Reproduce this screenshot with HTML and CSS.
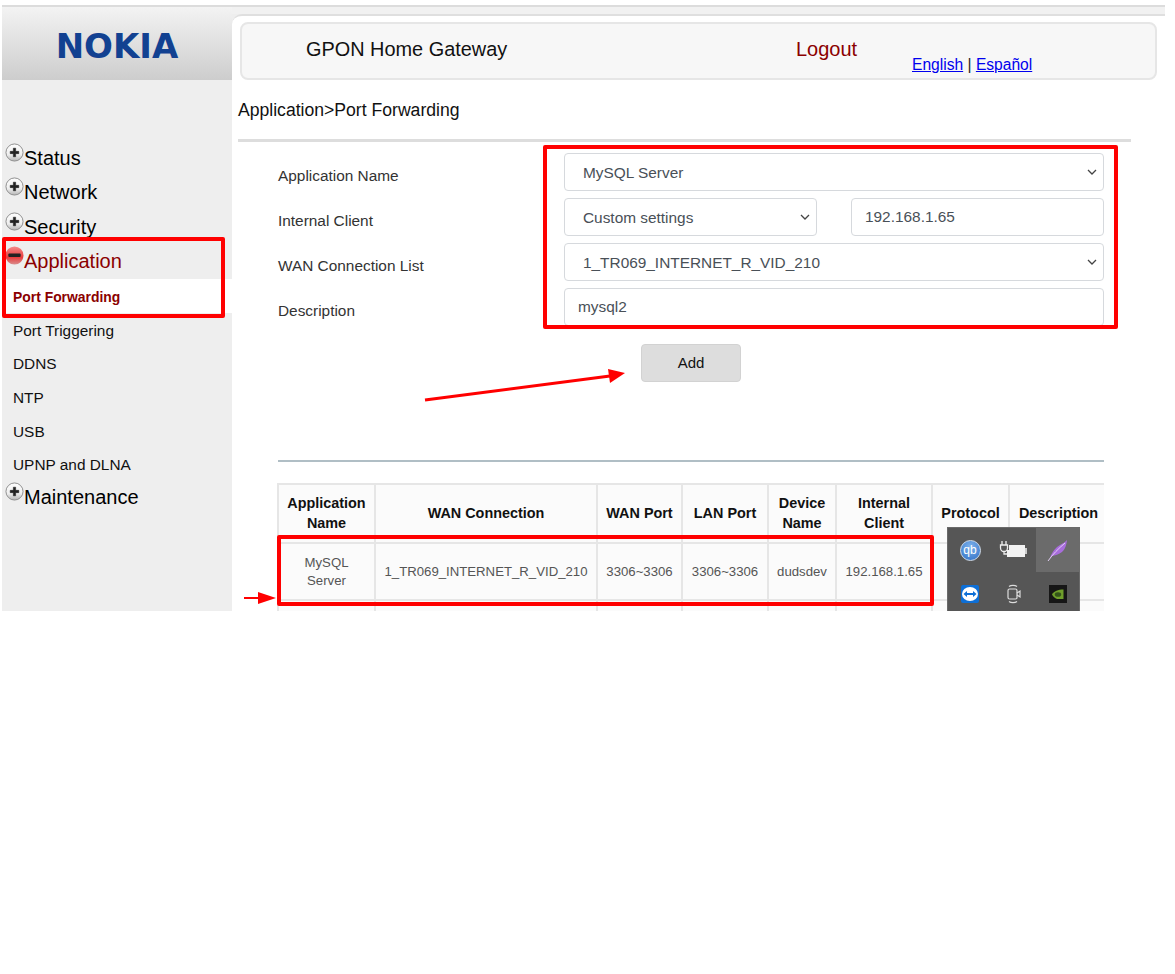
FILE: index.html
```html
<!DOCTYPE html>
<html lang="en">
<head>
    <meta charset="UTF-8">
    <title>GPON Home Gateway</title>
    <link rel="stylesheet" href="styles.css">
</head>
<body>

    <svg width="0" height="0" class="defs">
        <defs>
            <linearGradient id="bolaGris" x1="0" y1="0" x2="0" y2="1">
                <stop offset="0%" stop-color="#fdfdfd"/>
                <stop offset="60%" stop-color="#f0f0f0"/>
                <stop offset="100%" stop-color="#b5b5b5"/>
            </linearGradient>
            <linearGradient id="bolaRoja" x1="0" y1="0" x2="0" y2="1">
                <stop offset="0%" stop-color="#f58a8a"/>
                <stop offset="60%" stop-color="#e83c3c"/>
                <stop offset="100%" stop-color="#d98f8f"/>
            </linearGradient>
            <symbol id="mas" viewBox="0 0 20 20">
                <circle cx="10" cy="10" r="9" fill="url(#bolaGris)" stroke="#8c8c8c"/>
                <path d="M8.800 5.500h2.400v3.300h3.300v2.400h-3.300v3.300H8.800v-3.300H5.500V8.800h3.300z" fill="#222" stroke="#222" stroke-width=".6" stroke-linejoin="round"/>
            </symbol>
            <symbol id="menos" viewBox="0 0 20 20">
                <circle cx="10" cy="10" r="9.500" fill="url(#bolaRoja)"/>
                <rect x="3.500" y="8" width="13" height="3.500" rx="1" fill="#222"/>
            </symbol>
        </defs>
    </svg>

    <div id="pantalla">

        <aside id="lateral">
            <div id="logo"><span>NOKIA</span></div>

            <ul id="menu">
                <li class="grupo"><svg class="bola"><use href="#mas"/></svg>Status</li>
                <li class="grupo"><svg class="bola"><use href="#mas"/></svg>Network</li>
                <li class="grupo"><svg class="bola"><use href="#mas"/></svg>Security</li>
                <li class="grupo abierto"><svg class="bola"><use href="#menos"/></svg>Application</li>
                <li class="sub activo">Port Forwarding</li>
                <li class="sub">Port Triggering</li>
                <li class="sub">DDNS</li>
                <li class="sub">NTP</li>
                <li class="sub">USB</li>
                <li class="sub">UPNP and DLNA</li>
                <li class="grupo"><svg class="bola"><use href="#mas"/></svg>Maintenance</li>
            </ul>
        </aside>

        <main id="contenido">
            <div id="franja"></div>

            <div id="zonaCabecera">
                <header id="cabecera">
                    <span class="titulo">GPON Home Gateway</span>
                    <a class="logout">Logout</a>
                    <span class="idiomas"><a href="#">English</a> | <a href="#">Español</a></span>
                </header>
            </div>

            <h2 id="ruta">Application&gt;Port Forwarding</h2>
            <div id="linea"></div>

            <form id="formulario">
                <label>Application Name</label>
                <select class="campo lista ancho"><option>MySQL Server</option></select>

                <label>Internal Client</label>
                <div class="doble">
                    <select class="campo lista"><option>Custom settings</option></select>
                    <input class="campo" type="text" value="192.168.1.65">
                </div>

                <label>WAN Connection List</label>
                <select class="campo lista ancho"><option>1_TR069_INTERNET_R_VID_210</option></select>

                <label>Description</label>
                <input class="campo ancho" type="text" value="mysql2">
            </form>

            <div id="zonaBoton"><button type="button" id="agregar">Add</button></div>

            <div id="lineaTabla"></div>

            <div id="zonaTabla">
                <table id="tabla">
                    <colgroup>
                        <col class="c1"><col class="c2"><col class="c3"><col class="c4">
                        <col class="c5"><col class="c6"><col class="c7"><col class="c8">
                    </colgroup>
                    <tr class="titulos">
                        <th>Application Name</th>
                        <th>WAN Connection</th>
                        <th>WAN Port</th>
                        <th>LAN Port</th>
                        <th>Device Name</th>
                        <th>Internal Client</th>
                        <th>Protocol</th>
                        <th>Description</th>
                    </tr>
                    <tr class="fila">
                        <td>MySQL Server</td>
                        <td>1_TR069_INTERNET_R_VID_210</td>
                        <td>3306~3306</td>
                        <td>3306~3306</td>
                        <td>dudsdev</td>
                        <td>192.168.1.65</td>
                        <td></td>
                        <td></td>
                    </tr>
                    <tr class="fila">
                        <td></td><td></td><td></td><td></td><td></td><td></td><td></td><td></td>
                    </tr>
                </table>
            </div>
        </main>

        <!-- bandeja de iconos encima de la tabla -->
        <div id="bandeja">
            <div class="icono"><span class="qb">qb</span></div>
            <div class="icono">
                <svg width="30" height="22" viewBox="0 0 30 22">
                    <path d="M3 2v4M7 2v4M1.500 6h7v3a3.500 3.500 0 0 1-7 0zM5 12v3h3" fill="none" stroke="#eee" stroke-width="1.300"/>
                    <path d="M10 6h16v12H8v-7h2z" fill="#f2f2f2"/>
                    <rect x="26" y="9" width="2" height="6" fill="#ccc"/>
                </svg>
            </div>
            <div class="icono resaltado">
                <svg width="24" height="24" viewBox="0 0 24 24">
                    <path d="M4 20C6 14 10 9 14 7c3-1.500 5-3 7-5-.5 4-1.500 9-5 12-3 2.500-7 3.500-10 4z" fill="#a86ddc"/>
                    <path d="M2 23C7 16 12 11 19 5" stroke="#e4d0f5" stroke-width="1" fill="none"/>
                </svg>
            </div>
            <div class="icono">
                <svg width="18" height="18" viewBox="0 0 18 18">
                    <rect width="18" height="18" rx="2" fill="#0e6fd6"/>
                    <ellipse cx="9" cy="9" rx="8" ry="7" fill="#fff"/>
                    <path d="M2.500 9l3.500-3v2h6V6l3.500 3-3.500 3v-2H6v2z" fill="#0e6fd6"/>
                </svg>
            </div>
            <div class="icono">
                <svg width="14" height="20" viewBox="0 0 14 20" fill="none" stroke="#ddd" stroke-width="1.200">
                    <path d="M2 2.500c2-1.500 6-1.500 8 0M2 17.500c2 1.500 6 1.500 8 0"/>
                    <rect x="1" y="5" width="9" height="10" rx="1.500"/>
                    <path d="M10 9l3-2v6l-3-2"/>
                </svg>
            </div>
            <div class="icono">
                <svg width="18" height="18" viewBox="0 0 18 18">
                    <rect width="18" height="18" fill="#161616"/>
                    <path d="M3 9.500C5 6 9 4.500 14.500 4.500V14H8C6 13.500 4 11.500 3 9.500z" fill="#6f9e2b"/>
                    <ellipse cx="9" cy="9.500" rx="3.200" ry="2.300" fill="#34541a"/>
                </svg>
            </div>
        </div>

        <!-- anotaciones rojas -->
        <div class="marco" id="marcoMenu"></div>
        <div class="marco" id="marcoForm"></div>
        <div class="marco" id="marcoFila"></div>
        <svg id="flechas" width="1175" height="611" viewBox="0 0 1175 611">
            <line x1="425" y1="400" x2="610" y2="376" stroke="#f00" stroke-width="3"/>
            <path d="M625 373 608 369 610 383z" fill="#f00"/>
            <line x1="244" y1="598" x2="264" y2="598" stroke="#f00" stroke-width="2"/>
            <path d="M276 598 258 592 258 604z" fill="#f00"/>
        </svg>
    </div>

</body>
</html>
```
FILE: styles.css
```css
body{
    margin: 0;
    background-color: white;
    font-family: "Liberation Sans", Arial, sans-serif;
}

.defs{
    display: block;
    height: 0;
}

#pantalla{
    position: relative;
    height: 611px;
    width: 1165px;
    padding: 5px 0 0 2px;
    box-sizing: border-box;
    overflow: hidden;
    display: flex;
    align-items: stretch;
}

/* lateral */

#lateral{
    width: 230px;
    flex: none;
    background-color: #eeeeee;
    border-top: 2px solid #dcdcdc;
}

#logo{
    height: 73px;
    background: linear-gradient(#f3f3f3, #cdcdcd);
    text-align: center;
    box-sizing: border-box;
    padding: 19px 0 0 0;
}

#logo span{
    font-family: "DejaVu Sans", sans-serif;
    font-weight: bold;
    font-size: 34px;
    line-height: 40px;
    color: #124191;
    display: inline-block;
}

#menu{
    list-style: none;
    margin: 60px 0 0 0;
    padding: 0;
}

.grupo{
    height: 34.3px;
    display: flex;
    font-size: 20px;
    line-height: 36px;
    color: black;
    padding-left: 3px;
}

.abierto{
    color: #8b0000;
    height: 36.3px;
}

.bola{
    width: 19px;
    height: 19px;
    flex: none;
    margin-top: 3px;
}

.sub{
    height: 33.6px;
    line-height: 35px;
    font-size: 15.4px;
    color: #111;
    padding-left: 11px;
}

.sub + .grupo{
    margin-top: -2px;
}

.activo{
    background-color: white;
    color: #8b0000;
    font-weight: bold;
    font-size: 13.9px;
    line-height: 37px;
}

/* contenido */

#contenido{
    flex: 1;
    min-width: 0;
    border-top: 2px solid #dcdcdc;
    background: linear-gradient(#eeeeee 40px, white 40px);
    display: flex;
    flex-direction: column;
}

#franja{
    height: 7px;
    flex: none;
    background-color: #f1f1f1;
}

#zonaCabecera{
    flex: none;
    height: 66px;
    background-color: white;
    border-top: 2px solid #dfdfdf;
    border-top-left-radius: 10px;
    box-sizing: border-box;
    padding: 6px 8px 0 8px;
}

#cabecera{
    height: 58px;
    border: 2px solid #e6e6e6;
    border-radius: 8px;
    background-color: #f7f7f7;
    box-sizing: border-box;
    padding: 14px 0 0 64px;
    display: flex;
    align-items: flex-start;
}

.titulo{
    width: 490px;
    flex: none;
    font-size: 19.9px;
    line-height: 23px;
    color: #111;
}

.logout{
    width: 116px;
    flex: none;
    font-size: 20px;
    line-height: 23px;
    color: #8b0000;
}

.idiomas{
    margin-top: 18px;
    font-size: 15.6px;
    line-height: 18px;
    color: #222;
}

.idiomas a{
    color: #0000ee;
}

#ruta{
    flex: none;
    margin: 0;
    font-weight: normal;
    font-size: 17.6px;
    line-height: 20px;
    color: #111;
    padding: 20px 0 19px 6px;
}

#linea{
    flex: none;
    height: 3px;
    background-color: #dddddd;
    margin-left: 6px;
    width: 893px;
}

#formulario{
    flex: none;
    display: grid;
    grid-template-columns: 286px 540px;
    grid-auto-rows: 38px;
    row-gap: 7px;
    align-items: center;
    padding: 11px 0 0 46px;
}

#formulario label{
    font-size: 15.4px;
    color: #333;
    padding-top: 8px;
}

.doble{
    display: flex;
    justify-content: space-between;
}

.campo{
    height: 38px;
    width: 253px;
    box-sizing: border-box;
    border: 1px solid #d6d9dd;
    border-radius: 4px;
    background-color: white;
    font-family: "Liberation Sans", Arial, sans-serif;
    font-size: 15.4px;
    color: #495057;
    padding: 0 12px 0 13px;
    margin: 0;
}

.lista{
    appearance: none;
    padding-left: 18px;
    background-image: url("data:image/svg+xml,%3Csvg xmlns='http://www.w3.org/2000/svg' width='10' height='6'%3E%3Cpath d='M1 1l4 4 4-4' fill='none' stroke='%23444' stroke-width='1.300'/%3E%3C/svg%3E");
    background-repeat: no-repeat;
    background-position: right 6px center;
}

.ancho{
    width: 540px;
}

#zonaBoton{
    flex: none;
    padding: 18px 0 0 409px;
    height: 134px;
    box-sizing: border-box;
}

#agregar{
    width: 100px;
    height: 38px;
    background-color: #dddddd;
    border: 1px solid #d2d2d2;
    border-radius: 4px;
    font-family: "Liberation Sans", Arial, sans-serif;
    font-size: 15px;
    color: #111;
    padding: 0 0 2px 0;
}

#lineaTabla{
    flex: none;
    height: 2px;
    background-color: #b0bec5;
    margin-left: 46px;
    width: 826px;
}

#zonaTabla{
    margin: 21px 0 0 45px;
    width: 827px;
    flex: 1;
    overflow: hidden;
}

#tabla{
    border-collapse: collapse;
    table-layout: fixed;
    width: 830px;
    background-color: #fbfbfb;
}

.c1{ width: 97px; }
.c2{ width: 222px; }
.c3{ width: 85px; }
.c4{ width: 86px; }
.c5{ width: 68px; }
.c6{ width: 96px; }
.c7{ width: 77px; }
.c8{ width: 99px; }

#tabla th, #tabla td{
    border: 2px solid #e6e6e6;
    text-align: center;
    padding: 0 4px;
}

#tabla th{
    font-size: 14.4px;
    line-height: 20px;
    color: #111;
    padding-bottom: 2px;
}

#tabla td{
    font-size: 13.2px;
    line-height: 18px;
    color: #555;
    padding: 0 8px;
}

.titulos{
    height: 59px;
}

.fila{
    height: 57px;
}

/* encima de la tabla */

#bandeja{
    position: absolute;
    left: 947px;
    top: 527px;
    width: 133px;
    height: 100px;
    background-color: #565656;
    border: 1px solid #6a6a6a;
    box-sizing: border-box;
    display: grid;
    grid-template-columns: repeat(3, 44px);
    grid-auto-rows: 44px;
}

.icono{
    display: flex;
    align-items: center;
    justify-content: center;
}

.resaltado{
    background-color: #6b6b6b;
}

.qb{
    width: 19px;
    height: 19px;
    border-radius: 50%;
    background: radial-gradient(circle at 50% 30%, #7db2ec, #2f6fc4);
    border: 1px solid #cfdcec;
    color: white;
    font-size: 12px;
    line-height: 18px;
    text-align: center;
}

.marco{
    position: absolute;
    border: 4px solid #ff0000;
    box-sizing: border-box;
    border-radius: 2px;
}

#marcoMenu{
    left: 2px;
    top: 237px;
    width: 223px;
    height: 81px;
}

#marcoForm{
    left: 543px;
    top: 145px;
    width: 575px;
    height: 184px;
}

#marcoFila{
    left: 277px;
    top: 535px;
    width: 657px;
    height: 71px;
}

#flechas{
    position: absolute;
    left: 0;
    top: 0;
    pointer-events: none;
}
```
